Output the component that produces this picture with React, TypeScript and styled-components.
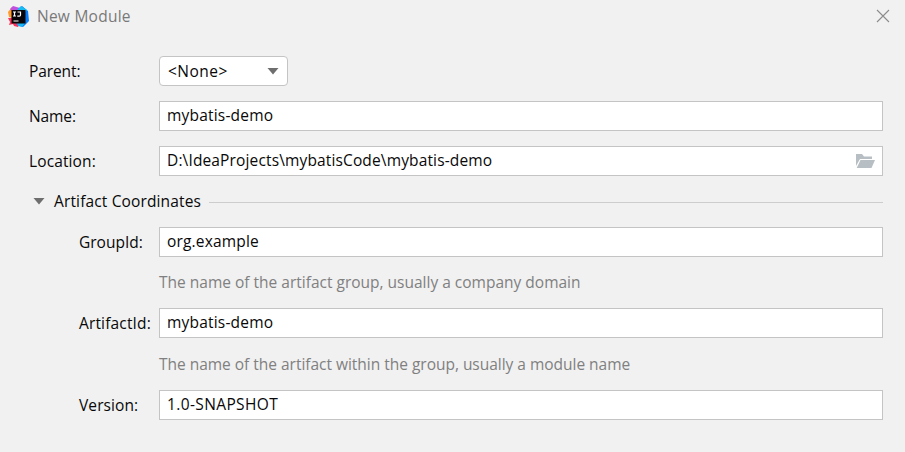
import React from 'react';
import styled, { createGlobalStyle } from 'styled-components';

const GlobalStyle = createGlobalStyle`
  * { box-sizing: border-box; }
  body { margin: 0; background: #f1f1f1; }
`;

const Dialog = styled.main`
  width: 905px;
  height: 452px;
  overflow: hidden;
  background: #f1f1f1;
  color: #080808;
  font: 15.5px/20px 'Open Sans', 'Noto Sans', sans-serif;
  white-space: nowrap;
`;

const TitleBar = styled.header`
  display: flex;
  align-items: center;
  height: 32px;
  padding: 0 15px 0 8px;
  color: #797979;
`;

const Title = styled.h1`
  flex: 1;
  margin: 0 0 0 8px;
  font-size: 15.5px;
  font-weight: 400;
  letter-spacing: 0.25px;
`;

const CloseButton = styled.button`
  display: flex;
  padding: 0;
  border: 0;
  background: none;
`;

const Form = styled.form`
  display: flex;
  flex-direction: column;
  padding: 24px 22px 0 28px;
`;

const Row = styled.div<{ $gap?: number; $nested?: boolean }>`
  display: flex;
  align-items: center;
  height: 30px;
  margin-bottom: ${(p) => p.$gap ?? 0}px;
  padding-left: ${(p) => (p.$nested ? 50 : 0)}px;
`;

const Label = styled.label<{ $nested?: boolean; $tracking: number }>`
  flex: none;
  width: ${(p) => (p.$nested ? 81 : 131)}px;
  padding: 0 0 1px 1px;
  letter-spacing: ${(p) => p.$tracking}px;
`;

const Field = styled.div<{ $tracking: number }>`
  display: flex;
  flex: 1;
  align-items: center;
  justify-content: space-between;
  height: 30px;
  padding: 0 7px 2px;
  border: 1px solid #c4c4c4;
  background: #fff;
  letter-spacing: ${(p) => p.$tracking}px;

  svg {
    margin-top: 2px;
  }
`;

const Select = styled.div`
  display: flex;
  align-items: center;
  justify-content: space-between;
  width: 129px;
  height: 30px;
  padding: 0 8px;
  border: 1px solid #c4c4c4;
  border-radius: 4px;
  background: #fff;
  letter-spacing: 0.5px;
`;

const SectionHeader = styled.div`
  display: flex;
  align-items: center;
  height: 20px;
  margin: 15px 0 16px;
  padding-left: 5px;
`;

const SectionTitle = styled.span`
  margin: 0 8px 0 9px;
  letter-spacing: 0.14px;
`;

const Rule = styled.span`
  flex: 1;
  height: 1px;
  margin-top: 2px;
  background: #cdcdcd;
`;

const Hint = styled.p<{ $above: number; $tracking?: number }>`
  height: 20px;
  margin: ${(p) => p.$above}px 0 16px 131px;
  color: #808080;
  letter-spacing: ${(p) => p.$tracking ?? 0}px;
`;

const Logo = () => (
  <svg width="21" height="21" viewBox="0 0 21 21">
    <path d="M0 6 4 1l8 3-4 9-7-2z" fill="#ff9a2b" />
    <path d="M2 3 5 0l7 2-2 6-6-3z" fill="#c04fe0" />
    <path d="M0 12h6l6 5-2 4-4-1-1-2-4 1 1-3z" fill="#fe315d" />
    <path d="M10 3 14 0l6 5 1 10-6 6-6-2 2-8z" fill="#087cfa" />
    <path d="m9 4 4-4 6 4-3 3z" fill="#16bdf2" />
    <path d="M9 17h8l-3 4-4-1z" fill="#19b8f5" />
    <rect x="3.500" y="4" width="14" height="13.500" fill="#080407" />
    <path
      d="M5 6h3M6.500 6v4M5 10h3M9.500 6h3v3q0 1.200-1.200 1.200H9.300M5.500 15h5"
      fill="none"
      stroke="#fff"
      strokeWidth="1.200"
    />
  </svg>
);

const CloseIcon = () => (
  <svg width="14" height="14" viewBox="0 0 14 14">
    <path d="m1 1 12 12M13 1 1 13" fill="none" stroke="#8c8c8c" strokeWidth="1.100" />
  </svg>
);

const Arrow = () => (
  <svg width="12" height="8" viewBox="0 0 12 8">
    <path d="M.5 1h11L6 7.500z" fill="#6e6e6e" />
  </svg>
);

const FolderIcon = () => (
  <svg width="19" height="14" viewBox="0 0 19 14">
    <path d="M0 12V0h6l2 2.500h8V5H4z" fill="#b8bfc4" />
    <path d="M4.500 6H19l-3.500 8H.7z" fill="#b8bfc4" />
  </svg>
);

export default function App() {
  return (
    <Dialog>
      <GlobalStyle />
      <TitleBar>
        <Logo />
        <Title>New Module</Title>
        <CloseButton type="button" aria-label="Close">
          <CloseIcon />
        </CloseButton>
      </TitleBar>
      <Form>
        <Row $gap={15}>
          <Label $tracking={-0.1}>Parent:</Label>
          <Select>
            &lt;None&gt;
            <Arrow />
          </Select>
        </Row>
        <Row $gap={15}>
          <Label $tracking={-0.1}>Name:</Label>
          <Field $tracking={0.2}>mybatis-demo</Field>
        </Row>
        <Row>
          <Label $tracking={0.12}>Location:</Label>
          <Field $tracking={0.14}>
            D:\IdeaProjects\mybatisCode\mybatis-demo
            <FolderIcon />
          </Field>
        </Row>
        <SectionHeader>
          <Arrow />
          <SectionTitle>Artifact Coordinates</SectionTitle>
          <Rule />
        </SectionHeader>
        <Row $nested>
          <Label $nested $tracking={0}>GroupId:</Label>
          <Field $tracking={0.18}>org.example</Field>
        </Row>
        <Hint $above={15}>The name of the artifact group, usually a company domain</Hint>
        <Row $nested>
          <Label $nested $tracking={0.15}>ArtifactId:</Label>
          <Field $tracking={0.2}>mybatis-demo</Field>
        </Row>
        <Hint $above={16} $tracking={-0.02}>
          The name of the artifact within the group, usually a module name
        </Hint>
        <Row $nested>
          <Label $nested $tracking={0.1}>Version:</Label>
          <Field $tracking={0.38}>1.0-SNAPSHOT</Field>
        </Row>
      </Form>
    </Dialog>
  );
}
